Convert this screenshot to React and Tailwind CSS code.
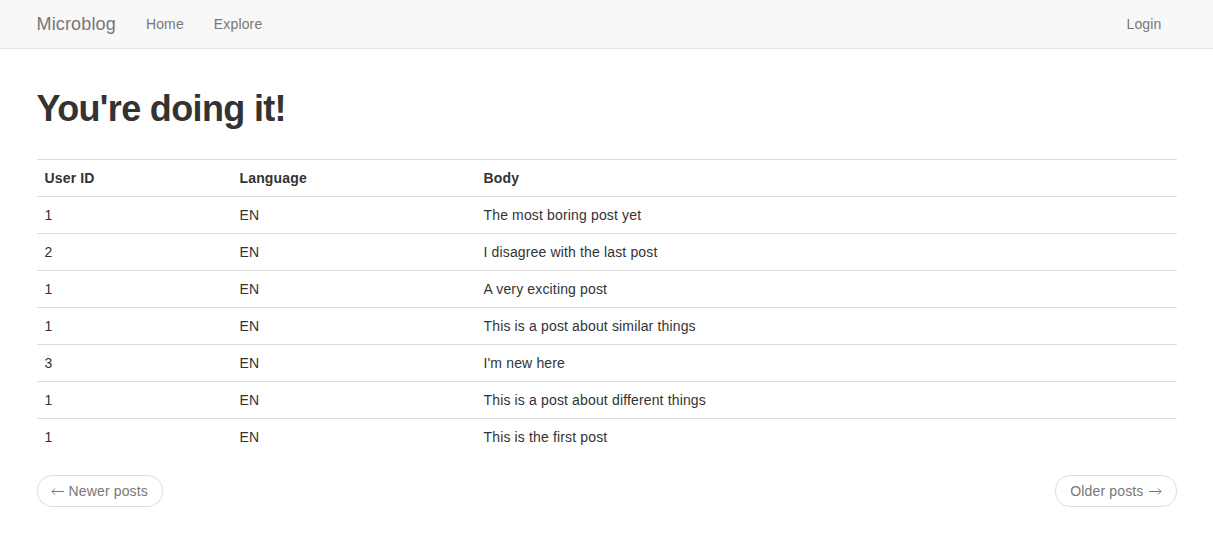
import React from 'react';

const posts = [
  { user: 1, lang: 'EN', body: 'The most boring post yet' },
  { user: 2, lang: 'EN', body: 'I disagree with the last post' },
  { user: 1, lang: 'EN', body: 'A very exciting post' },
  { user: 1, lang: 'EN', body: 'This is a post about similar things' },
  { user: 3, lang: 'EN', body: "I'm new here" },
  { user: 1, lang: 'EN', body: 'This is a post about different things' },
  { user: 1, lang: 'EN', body: 'This is the first post' },
];

// thin long arrow like the Helvetica glyph
const Arrow = ({ left }) => (
  <svg width="14" height="10" viewBox="0 0 14 10" className="inline-block" fill="none" stroke="#777" strokeWidth="1">
    {left ? (
      <>
        <path d="M1 5.5H13" />
        <path d="M4 2.5L1 5.5L4 8.5" />
      </>
    ) : (
      <>
        <path d="M1 5.5H13" />
        <path d="M10 2.5L13 5.5L10 8.5" />
      </>
    )}
  </svg>
);

const App = () => {
  return (
    <div className="min-h-[559px] bg-white text-[14px] leading-[20px] tracking-[0.15px] text-[#333]" style={{ fontFamily: '"Liberation Sans", Arial, sans-serif' }}>
      <nav className="h-[49px] bg-[#f8f8f8] border-b border-[#e7e7e7]">
        <div className="w-[1170px] mx-auto px-[15px] flex items-center h-[48px]">
          <a className="text-[18px] text-[#777] pr-[15px]">Microblog</a>
          <a className="text-[#777] px-[15px]">Home</a>
          <a className="text-[#777] px-[15px]">Explore</a>
          <a className="text-[#777] ml-auto pr-[15px]">Login</a>
        </div>
      </nav>

      <div className="w-[1170px] mx-auto px-[15px]">
        <h1 className="text-[36px] leading-[40px] font-bold tracking-[-0.65px] text-[#333] mt-[40px] mb-[30px]">You're doing it!</h1>

        <table className="w-full border-collapse">
          <thead>
            <tr className="border-t border-b border-[#ddd]">
              <th className="w-[195px] text-left font-bold px-[8px] py-[8px]">User ID</th>
              <th className="w-[244px] text-left font-bold px-[8px] py-[8px]">Language</th>
              <th className="text-left font-bold px-[8px] py-[8px]">Body</th>
            </tr>
          </thead>
          <tbody>
            {posts.map((p, i) => (
              <tr key={i} className={i > 0 ? 'border-t border-[#ddd]' : ''}>
                <td className="px-[8px] py-[8px]">{p.user}</td>
                <td className="px-[8px] py-[8px]">{p.lang}</td>
                <td className="px-[8px] py-[8px]">{p.body}</td>
              </tr>
            ))}
          </tbody>
        </table>

        <div className="flex justify-between mt-[20px]">
          <span className="border border-[#ddd] rounded-[15px] pl-[13px] pr-[14px] py-[5px] text-[#777] flex items-center gap-[4px]"><Arrow left />Newer posts</span>
          <span className="border border-[#ddd] rounded-[15px] px-[14px] py-[5px] text-[#777] flex items-center gap-[4px]">Older posts<Arrow /></span>
        </div>
      </div>
    </div>
  );
};

export default App;
